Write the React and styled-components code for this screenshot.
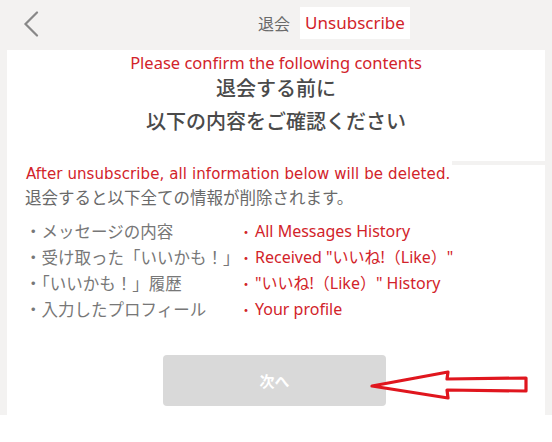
import React from "react";
import styled, { createGlobalStyle } from "styled-components";

const GlobalStyle = createGlobalStyle`
  html, body {
    margin: 0;
    padding: 0;
    background: #ffffff;
    font-family: "Noto Sans CJK JP", "Noto Sans", sans-serif;
  }
`;

const jpItems = [
  "・メッセージの内容",
  "・受け取った「いいかも！」",
  "・「いいかも！」履歴",
  "・入力したプロフィール",
];

const enItems = [
  "All Messages History",
  "Received \"いいね!（Like）\"",
  "\"いいね!（Like）\" History",
  "Your profile",
];

export default function App() {
  return (
    <>
      <GlobalStyle />
      <Page>
        <Header>
          <BackButton aria-label="back">
            <svg width="16" height="26" viewBox="0 0 16 26">
              <path
                d="M14 1.5 L2.5 13 L14 24.5"
                fill="none"
                stroke="#888"
                strokeWidth="2.2"
                strokeLinecap="round"
              />
            </svg>
          </BackButton>
          <Title>退会</Title>
          <Note>Unsubscribe</Note>
        </Header>

        <Card>
          <ConfirmNote>Please confirm the following contents</ConfirmNote>
          <Heading>
            退会する前に
            <br />
            以下の内容をご確認ください
          </Heading>
        </Card>

        <Card $tall>
          <DeleteNote>
            After unsubscribe, all information below will be deleted.
          </DeleteNote>
          <Lead>退会すると以下全ての情報が削除されます。</Lead>
          <ItemGrid>
            {jpItems.map((item, i) => (
              <React.Fragment key={i}>
                <JpItem>{item}</JpItem>
                <EnItem>
                  <Dot>・</Dot>
                  {enItems[i]}
                </EnItem>
              </React.Fragment>
            ))}
          </ItemGrid>
          <ButtonRow>
            <NextButton disabled>次へ</NextButton>
            <Arrow width="162" height="34" viewBox="0 0 162 34">
              <path
                d="M2 19 L78 5 L77 12 L156 11 L156 24 L77 23 L78 31 Z"
                fill="#fff"
                stroke="#e0161e"
                strokeWidth="3.2"
                strokeLinejoin="round"
              />
            </Arrow>
          </ButtonRow>
        </Card>
      </Page>
    </>
  );
}

const Page = styled.div`
  background: #f3f2f1;
  padding: 0 7px;
  width: 552px;
  box-sizing: border-box;
`;

const Header = styled.header`
  height: 50px;
  display: flex;
  align-items: center;
  position: relative;
  justify-content: center;
`;

const BackButton = styled.div`
  position: absolute;
  left: 16px;
  top: 11px;
  display: flex;
`;

const Title = styled.span`
  font-size: 16px;
  color: #6a6a6a;
  margin-left: 116px;
  margin-top: -4px;
`;

const Note = styled.span`
  background: #fff;
  color: #d2232a;
  font-family: "Noto Sans", sans-serif;
  font-size: 17px;
  padding: 4px 5px 5px;
  margin-left: 10px;
  margin-top: -4px;
`;

const Card = styled.section`
  background: #fff;
  height: ${(p) => (p.$tall ? "250px" : "111px")};
  margin-bottom: ${(p) => (p.$tall ? "0" : "4px")};
  display: flex;
  flex-direction: column;
  align-items: ${(p) => (p.$tall ? "stretch" : "center")};
  position: relative;
`;

const ConfirmNote = styled.div`
  color: #d2232a;
  font-family: "Noto Sans", sans-serif;
  font-size: 16.5px;
  line-height: 20px;
  margin-top: 3px;
`;

const Heading = styled.h1`
  margin: -2px 0 0;
  font-size: 20px;
  font-weight: 500;
  color: #4a4a4a;
  text-align: center;
  line-height: 33px;
`;

const DeleteNote = styled.div`
  align-self: flex-start;
  background: #fff;
  color: #d2232a;
  font-family: "DejaVu Sans", sans-serif;
  font-size: 15px;
  letter-spacing: 0.1px;
  line-height: 20px;
  padding: 4px 2px 2px 19px;
  margin-top: -5px;
  position: relative;
`;

const Lead = styled.div`
  color: #6a6a6a;
  font-size: 16.5px;
  line-height: 22px;
  padding-left: 18px;
`;

const ItemGrid = styled.div`
  display: grid;
  grid-template-columns: 214px auto;
  row-gap: 2px;
  padding-left: 18px;
  margin-top: 11px;
`;

const JpItem = styled.div`
  color: #777;
  font-size: 16.5px;
  line-height: 24px;
`;

const EnItem = styled.div`
  color: #d2232a;
  font-family: "Noto Sans", "Noto Sans CJK JP", sans-serif;
  font-size: 16px;
  line-height: 24px;
`;

const Dot = styled.span`
  font-family: "Noto Sans CJK JP", sans-serif;
  font-size: 14px;
  margin-right: 2px;
`;

const ButtonRow = styled.div`
  position: relative;
  display: flex;
  justify-content: flex-start;
  padding-left: 156px;
  margin-top: 34px;
`;

const NextButton = styled.button`
  width: 223px;
  height: 51px;
  border: none;
  border-radius: 4px;
  background: #d9d9d9;
  color: #fff;
  font-family: "Noto Sans CJK JP", sans-serif;
  font-size: 15px;
  font-weight: 700;
`;

const Arrow = styled.svg`
  position: absolute;
  left: 363px;
  top: 12px;
`;
